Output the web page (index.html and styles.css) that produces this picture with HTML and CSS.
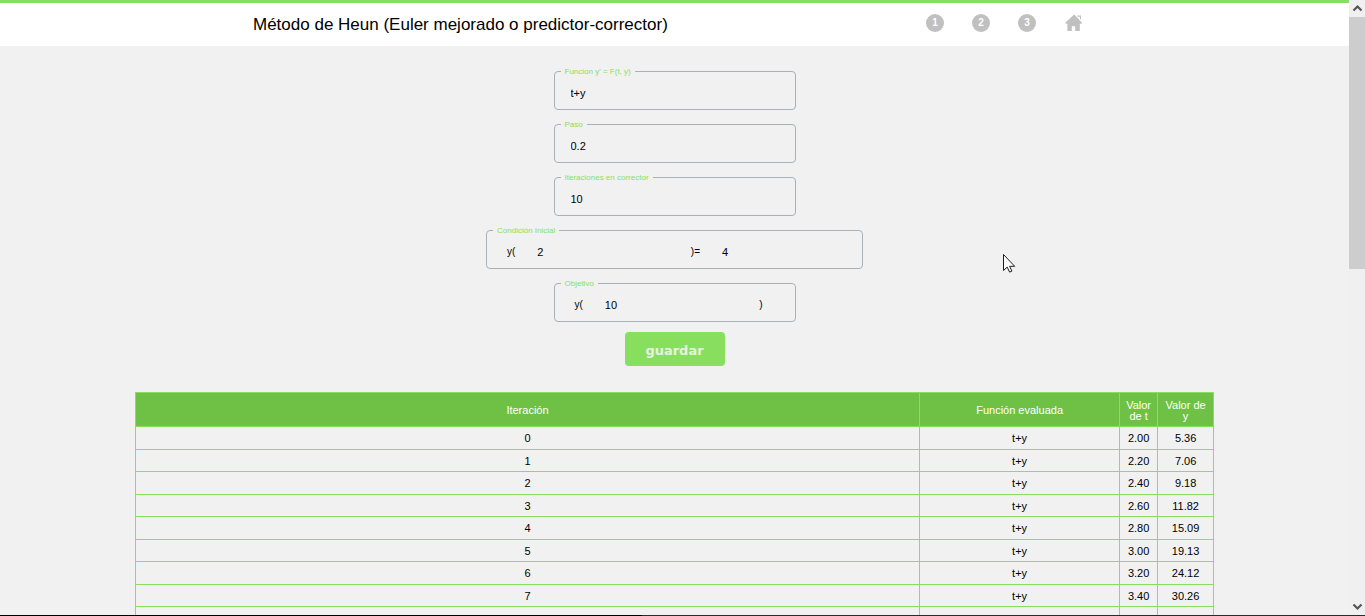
FILE: index.html
```html
<!DOCTYPE html>
<html lang="es">
<head>
<meta charset="utf-8">
<title>Método de Heun</title>
<link rel="stylesheet" href="styles.css">
</head>
<body>
<div class="window">
  <div class="viewport">
    <div class="page">
      <header class="topbar">
        <div class="topbar-inner">
          <h1 class="title">Método de Heun (Euler mejorado o predictor-corrector)</h1>
          <nav class="nav">
            <a class="step" href="#uno">1</a>
            <a class="step" href="#dos">2</a>
            <a class="step" href="#tres">3</a>
            <a class="home" href="#inicio" aria-label="Inicio">
              <svg class="home-icon" viewBox="0 0 18 18" aria-hidden="true"><path d="M10 .5 1.6 8.4v1.3h1.8V17h4.4v-4.8h3.4V17h4.6V9.700h2V8.400l-2.400-2.300L14 4.200z" fill="#c0c0c0"/><path d="M13.400 1.600h3.600v4.200l-1.100-1V2.800h-2.500z" fill="#c0c0c0"/></svg>
            </a>
          </nav>
        </div>
      </header>
      <main>
        <form class="form">
          <fieldset class="field">
            <legend><label for="funcion">Funcion y' = F(t, y)</label></legend>
            <input class="value" id="funcion" type="text" value="t+y">
          </fieldset>
          <fieldset class="field">
            <legend><label for="paso">Paso</label></legend>
            <input class="value" id="paso" type="text" value="0.2">
          </fieldset>
          <fieldset class="field">
            <legend><label for="iteraciones">Iteraciones en corrector</label></legend>
            <input class="value" id="iteraciones" type="text" value="10">
          </fieldset>
          <fieldset class="field field-wide">
            <legend>Condición Inicial</legend>
            <div class="pair">
              <label for="t0">y(</label>
              <input class="value" id="t0" type="text" value="2">
              <label for="y0">)=</label>
              <input class="value value-short" id="y0" type="text" value="4">
            </div>
          </fieldset>
          <fieldset class="field">
            <legend>Objetivo</legend>
            <div class="pair pair-single">
              <label for="objetivo">y(</label>
              <input class="value" id="objetivo" type="text" value="10">
              <span>)</span>
            </div>
          </fieldset>
          <button class="save" type="button">guardar</button>
        </form>
        <table class="results">
          <colgroup><col><col class="col-fn"><col class="col-t"><col class="col-y"></colgroup>
          <thead>
            <tr><th>Iteración</th><th>Función evaluada</th><th>Valor de t</th><th>Valor de y</th></tr>
          </thead>
          <tbody>
            <tr><td>0</td><td>t+y</td><td>2.00</td><td>5.36</td></tr>
            <tr><td>1</td><td>t+y</td><td>2.20</td><td>7.06</td></tr>
            <tr><td>2</td><td>t+y</td><td>2.40</td><td>9.18</td></tr>
            <tr><td>3</td><td>t+y</td><td>2.60</td><td>11.82</td></tr>
            <tr><td>4</td><td>t+y</td><td>2.80</td><td>15.09</td></tr>
            <tr><td>5</td><td>t+y</td><td>3.00</td><td>19.13</td></tr>
            <tr><td>6</td><td>t+y</td><td>3.20</td><td>24.12</td></tr>
            <tr><td>7</td><td>t+y</td><td>3.40</td><td>30.26</td></tr>
            <tr><td></td><td></td><td></td><td></td></tr>
          </tbody>
        </table>
      </main>
    </div>
    <div class="scrollbar" aria-hidden="true">
      <svg class="arrow" viewBox="0 0 16 17"><path d="M4.500 10.500 8.500 6.500 12.500 10.500" fill="none" stroke="#555" stroke-width="2.200"/></svg>
      <div class="thumb"></div>
      <svg class="arrow arrow-down" viewBox="0 0 16 17"><path d="M4.500 6.500 8.500 10.500 12.500 6.500" fill="none" stroke="#555" stroke-width="2.200"/></svg>
    </div>
  </div>
  <div class="edge"></div>
  <svg class="cursor" viewBox="0 0 13 19" aria-hidden="true"><path d="M.5.5v16l3.700-3.400 2.400 5 2.300-1-2.300-4.800h5.100z" fill="#fff" stroke="#1c1c28" stroke-width="1"/></svg>
</div>
</body>
</html>
```
FILE: styles.css
```css
* { box-sizing: border-box; }

body {
  margin: 0;
  background: #f1f1f1;
  color: #000;
  font-family: "Liberation Sans", Arial, sans-serif;
  font-size: 11px;
}

.window {
  position: relative;
  display: flex;
  flex-direction: column;
  height: 100vh;
  overflow: hidden;
}

.viewport { display: flex; flex: 1; min-height: 0; }
.page { flex: 1; overflow: hidden; }

.topbar {
  background: #fff;
  border-top: 3px solid #88df5d;
}

.topbar-inner {
  display: flex;
  align-items: flex-start;
  justify-content: space-between;
  max-width: 843px;
  margin: 0 auto;
  padding: 11px 14px 10px 0;
}

.title { margin: 0; font-size: 17px; font-weight: 400; line-height: 22px; }

.nav { display: flex; gap: 28px; }

.step {
  width: 18px;
  height: 18px;
  border-radius: 50%;
  background: #c0c0c0;
  color: #fff;
  font-size: 10px;
  font-weight: 700;
  line-height: 18px;
  text-align: center;
  text-decoration: none;
}

.home, .home-icon { display: block; width: 18px; height: 18px; }

.form {
  display: flex;
  flex-direction: column;
  align-items: center;
  gap: 10px;
  padding: 21px 0 26px;
}

.field {
  width: 242px;
  min-width: 0;
  margin: 0;
  padding: 0 6px;
  border: 1px solid #a9b0b8;
  border-radius: 4px;
}

.field-wide { width: 377px; }

legend {
  padding: 0 4px;
  color: #88df5d;
  font-size: 8px;
  line-height: 9px;
}

.value {
  display: block;
  width: 100%;
  min-width: 0;
  height: 33px;
  padding: 0 10px;
  border: 0;
  background: transparent;
  color: #000;
  font: inherit;
  outline: 0;
}

.pair {
  display: flex;
  align-items: center;
  gap: 6px;
  padding: 0 14px;
  font-size: 10px;
}

.pair-single { padding-right: 26px; }
.pair .value { flex: 1; padding: 0 16px; font-size: 11px; }
.pair .value-short { flex: 0 0 136px; }

.save {
  width: 100px;
  height: 34px;
  padding: 2px 0 0;
  border: 0;
  border-radius: 4px;
  background: #88df5d;
  color: #e8f0e4;
  font-family: "DejaVu Sans", sans-serif;
  font-size: 13px;
  font-weight: 700;
}

.results {
  width: 80%;
  margin: 0 auto;
  border-collapse: collapse;
  table-layout: fixed;
  text-align: center;
}

.col-fn { width: 200px; }
.col-t { width: 38px; }
.col-y { width: 56px; }

.results th, .results td { border: 1px solid #88df5d; }

.results th {
  height: 34px;
  padding: 2px 4px 0;
  background: #6fc145;
  color: #fff;
  font-weight: 400;
  line-height: 11px;
}

.results td { height: 22px; padding: 0; line-height: 12px; }
.results tbody tr:nth-child(odd) td { height: 23px; }

.scrollbar {
  display: flex;
  flex-direction: column;
  width: 16px;
  background: #f0f0f0;
}

.arrow { display: block; width: 16px; height: 17px; }
.arrow-down { margin-top: auto; }
.thumb { height: 41%; background: #cdcdcd; }

.edge { height: 1px; background: linear-gradient(90deg, #000 47%, #2b2b2b 47%); }

.cursor {
  position: absolute;
  left: 1003px;
  top: 254px;
  width: 13px;
  height: 19px;
}
```
